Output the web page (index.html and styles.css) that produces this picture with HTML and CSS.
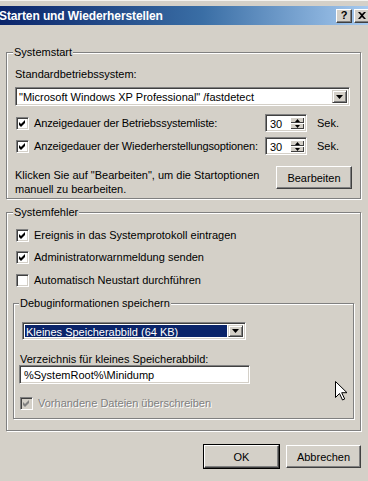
FILE: index.html
```html
<!DOCTYPE html>
<html lang="de">
<head>
    <meta charset="UTF-8">
    <meta name="viewport" content="width=device-width, initial-scale=1.0">
    <title>Starten und Wiederherstellen</title>
    <link rel="stylesheet" href="styles.css">
</head>
<body>
    <div class="window">
        <div class="titlebar">
            <span class="title">Starten und Wiederherstellen</span>
            <div class="caption-buttons">
                <span class="caption-btn">?</span>
                <span class="caption-btn">
                    <svg width="8" height="7" viewBox="0 0 8 7"><path d="M0 0h2l2 2 2-2h2L5 3.5 8 7H6L4 5 2 7H0l3-3.5z" fill="#000"/></svg>
                </span>
            </div>
        </div>

        <div class="client">
            <!-- Systemstart -->
            <fieldset class="group">
                <legend>Systemstart</legend>
                <div class="group-body start-body">
                    <div class="field-label">Standardbetriebssystem:</div>
                    <div class="combo combo-os">
                        <span class="combo-text">"Microsoft Windows XP Professional" /fastdetect</span>
                        <span class="combo-arrow"><svg width="7" height="4" viewBox="0 0 7 4"><path d="M0 0h7L3.5 4z" fill="#000"/></svg></span>
                    </div>
                    <div class="spin-row">
                        <span class="check"><svg width="9" height="9" viewBox="0 0 9 9"><path d="M1 3l2 2 4-4v3L3 8 1 6z" fill="#000"/></svg></span>
                        <span class="spin-label">Anzeigedauer der Betriebssystemliste:</span>
                        <div class="spin">
                            <span class="spin-value">30</span>
                            <span class="spin-buttons">
                                <span class="spin-btn"><svg width="5" height="3" viewBox="0 0 5 3"><path d="M2.5 0L5 3H0z" fill="#000"/></svg></span>
                                <span class="spin-btn"><svg width="5" height="3" viewBox="0 0 5 3"><path d="M0 0h5L2.5 3z" fill="#000"/></svg></span>
                            </span>
                        </div>
                        <span>Sek.</span>
                    </div>
                    <div class="spin-row">
                        <span class="check"><svg width="9" height="9" viewBox="0 0 9 9"><path d="M1 3l2 2 4-4v3L3 8 1 6z" fill="#000"/></svg></span>
                        <span class="spin-label">Anzeigedauer der Wiederherstellungsoptionen:</span>
                        <div class="spin">
                            <span class="spin-value">30</span>
                            <span class="spin-buttons">
                                <span class="spin-btn"><svg width="5" height="3" viewBox="0 0 5 3"><path d="M2.5 0L5 3H0z" fill="#000"/></svg></span>
                                <span class="spin-btn"><svg width="5" height="3" viewBox="0 0 5 3"><path d="M0 0h5L2.5 3z" fill="#000"/></svg></span>
                            </span>
                        </div>
                        <span>Sek.</span>
                    </div>
                    <div class="edit-row">
                        <p class="hint">Klicken Sie auf "Bearbeiten", um die Startoptionen<br>manuell zu bearbeiten.</p>
                        <button class="btn btn-edit">Bearbeiten</button>
                    </div>
                </div>
            </fieldset>

            <!-- Systemfehler -->
            <fieldset class="group group-errors">
                <legend>Systemfehler</legend>
                <div class="group-body errors-body">
                    <div class="check-row">
                        <span class="check"><svg width="9" height="9" viewBox="0 0 9 9"><path d="M1 3l2 2 4-4v3L3 8 1 6z" fill="#000"/></svg></span>
                        <span>Ereignis in das Systemprotokoll eintragen</span>
                    </div>
                    <div class="check-row">
                        <span class="check"><svg width="9" height="9" viewBox="0 0 9 9"><path d="M1 3l2 2 4-4v3L3 8 1 6z" fill="#000"/></svg></span>
                        <span>Administratorwarnmeldung senden</span>
                    </div>
                    <div class="check-row">
                        <span class="check"></span>
                        <span>Automatisch Neustart durchführen</span>
                    </div>

                    <fieldset class="group group-debug">
                        <legend>Debuginformationen speichern</legend>
                        <div class="group-body debug-body">
                            <div class="combo combo-dump">
                                <span class="combo-text selected">Kleines Speicherabbild (64 KB)</span>
                                <span class="combo-arrow"><svg width="7" height="4" viewBox="0 0 7 4"><path d="M0 0h7L3.5 4z" fill="#000"/></svg></span>
                            </div>
                            <div class="field-label dir-label">Verzeichnis für kleines Speicherabbild:</div>
                            <div class="textbox">%SystemRoot%\Minidump</div>
                            <div class="check-row disabled">
                                <span class="check"><svg width="9" height="9" viewBox="0 0 9 9"><path d="M1 3l2 2 4-4v3L3 8 1 6z" fill="#808080"/></svg></span>
                                <span>Vorhandene Dateien überschreiben</span>
                            </div>
                        </div>
                    </fieldset>
                </div>
            </fieldset>

            <div class="actions">
                <button class="btn btn-default">OK</button>
                <button class="btn">Abbrechen</button>
            </div>
        </div>

        <!-- mouse pointer -->
        <svg class="pointer" width="12" height="20" viewBox="0 0 12 20">
            <path d="M0.5 0.5v16l4-4 3 6.5 2.2-1-3-6.3h5.3z" fill="#fff" stroke="#000" stroke-width="1"/>
        </svg>
    </div>
</body>
</html>
```

FILE: styles.css
```css
/* Windows classic dialog */
body {
    margin: 0;
    padding: 0;
    background: #d4d0c8;
    font-family: "Liberation Sans", Arial, sans-serif;
    font-size: 11px;
    color: #000;
}

.window {
    position: relative;
    width: 368px;
    height: 481px;
    overflow: hidden;
    background: #d4d0c8;
    padding-top: 5px;
    box-sizing: border-box;
    border-top: 1px solid #f4f2ee;
}

/* Title bar */
.titlebar {
    height: 19px;
    display: flex;
    align-items: center;
    justify-content: space-between;
    background: linear-gradient(to right, #0a246a 0%, #3a6ea5 55%, #a6caf0 100%);
}

.title {
    color: #fff;
    font-weight: bold;
    font-size: 12px;
    margin-left: -1px;
    letter-spacing: -0.1px;
    white-space: nowrap;
}

.caption-buttons {
    display: flex;
    gap: 2px;
    margin-right: -2px;
}

.caption-btn {
    width: 16px;
    height: 14px;
    box-sizing: border-box;
    display: flex;
    align-items: center;
    justify-content: center;
    background: #d4d0c8;
    border: 1px solid;
    border-color: #fff #404040 #404040 #fff;
    box-shadow: inset -1px -1px 0 #808080;
    font-weight: bold;
    font-size: 11px;
    line-height: 1;
}

/* Group boxes */
.client {
    padding: 0 7px 0 6px;
}

.group {
    margin: 21px 0 0 0;
    padding: 0;
    min-width: 0;
    border: 1px solid #808080;
    box-shadow: 1px 1px 0 #fff, inset 1px 1px 0 #fff;
}

.group legend {
    padding: 0 1px;
    margin-left: 6px;
    line-height: 12px;
    background: #d4d0c8;
}

.group-errors {
    margin-top: 7px;
}

.group-debug {
    margin: 9px 0 0 0;
}

.group-debug legend {
    margin-left: 5px;
}

.group-body {
    display: flex;
    flex-direction: column;
}

.start-body {
    padding: 9px 8px 2px 8px;
}

.errors-body {
    padding: 9px 6px 11px 6px;
}

.debug-body {
    padding: 13px 5px 7px 5px;
}

.field-label {
    line-height: 14px;
}

/* Sunken fields */
.combo,
.textbox,
.spin,
.check {
    box-sizing: border-box;
    background: #fff;
    border: 1px solid;
    border-color: #808080 #fff #fff #808080;
    box-shadow: inset 1px 1px 0 #404040, inset -1px -1px 0 #d4d0c8;
}

.combo {
    display: flex;
    align-items: stretch;
    padding: 2px;
}

.combo-os {
    height: 19px;
    width: 335px;
    margin-top: 6px;
}

.combo-dump {
    height: 18px;
    width: 224px;
    margin-left: 3px;
}

.combo-text {
    flex: 1;
    padding-left: 1px;
    line-height: 14px;
    white-space: nowrap;
    overflow: hidden;
}

.combo-text.selected {
    background: #0a246a;
    color: #fff;
    margin-right: 1px;
}

.combo-arrow {
    width: 15px;
    box-sizing: border-box;
    display: flex;
    align-items: center;
    justify-content: center;
    background: #d4d0c8;
    border: 1px solid;
    border-color: #d4d0c8 #404040 #404040 #d4d0c8;
    box-shadow: inset 1px 1px 0 #fff, inset -1px -1px 0 #808080;
}

/* Checkboxes */
.check {
    width: 13px;
    height: 13px;
    flex: none;
    display: flex;
    align-items: center;
    justify-content: center;
}

.check-row {
    display: flex;
    align-items: center;
    gap: 5px;
    height: 16px;
    padding-left: 3px;
}

.check-row + .check-row {
    margin-top: 6px;
}

.check-row:nth-child(3) {
    margin-top: 7px;
}

.check-row.disabled {
    margin-top: 11px;
    padding-left: 1px;
    color: #808080;
    text-shadow: 1px 1px 0 #fff;
}

.check-row.disabled .check {
    background: #d4d0c8;
}

/* Spinner rows */
.spin-row {
    display: grid;
    grid-template-columns: 18px 231px 52px 1fr;
    align-items: center;
    height: 18px;
    margin-top: 8px;
    padding-left: 1px;
}

.spin-row + .spin-row {
    margin-top: 5px;
}

.spin-label {
    letter-spacing: -0.12px;
    white-space: nowrap;
}

.spin {
    width: 42px;
    height: 18px;
    display: flex;
    align-items: stretch;
    padding: 2px;
}

.spin-value {
    flex: 1;
    padding-left: 2px;
    line-height: 14px;
}

.spin-buttons {
    width: 14px;
    display: flex;
    flex-direction: column;
}

.spin-btn {
    flex: 1;
    display: flex;
    align-items: center;
    justify-content: center;
    background: #d4d0c8;
    box-shadow: inset 1px 1px 0 #fff, inset -1px -1px 0 #404040;
}

/* Edit row */
.edit-row {
    display: flex;
    justify-content: space-between;
    align-items: flex-start;
    margin-top: 11px;
    height: 30px;
}

.hint {
    margin: 2px 0 0 0;
    line-height: 14px;
}

/* Buttons */
.btn {
    font: inherit;
    color: #000;
    width: 75px;
    height: 23px;
    padding: 0;
    background: #d4d0c8;
    border: 1px solid;
    border-color: #fff #404040 #404040 #fff;
    box-shadow: inset -1px -1px 0 #808080;
}

.btn-edit {
    width: 76px;
}

.btn-default {
    border-color: #fff #404040 #404040 #fff;
    box-shadow: inset -1px -1px 0 #808080, 0 0 0 1px #000;
}

.actions {
    display: flex;
    justify-content: flex-end;
    gap: 7px;
    margin-top: 14px;
}

/* Text box */
.textbox {
    width: 231px;
    height: 19px;
    padding: 2px 4px;
    line-height: 14px;
}

.dir-label {
    margin-top: 13px;
    padding-left: 1px;
    line-height: 12px;
}

/* Mouse pointer */
.pointer {
    position: absolute;
    left: 335px;
    top: 380px;
}
```
